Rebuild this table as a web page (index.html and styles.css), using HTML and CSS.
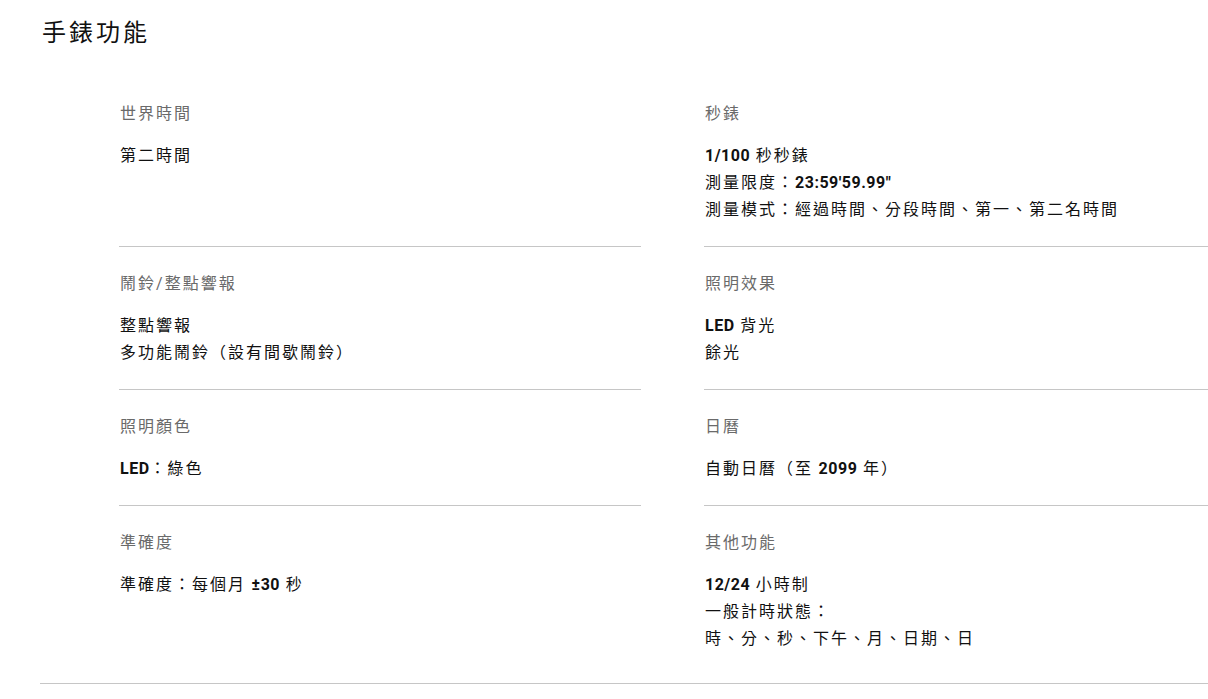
FILE: index.html
```html
<!DOCTYPE html>
<html lang="zh-Hant">
<head>
<meta charset="utf-8">
<title>手錶功能</title>
<link rel="stylesheet" href="styles.css">
</head>
<body>
<section class="features">
  <h2 class="features-title">手錶功能</h2>
  <div class="features-grid">
    <div class="item">
      <div class="label">世界時間</div>
      <div class="value"><p>第二時間</p></div>
    </div>
    <div class="item">
      <div class="label">秒錶</div>
      <div class="value">
        <p><span class="num">1/100</span> 秒秒錶</p>
        <p>測量限度：<span class="num">23:59'59.99"</span></p>
        <p>測量模式：經過時間、分段時間、第一、第二名時間</p>
      </div>
    </div>
    <div class="item">
      <div class="label">鬧鈴<span class="lat">/</span>整點響報</div>
      <div class="value">
        <p>整點響報</p>
        <p>多功能鬧鈴（設有間歇鬧鈴）</p>
      </div>
    </div>
    <div class="item">
      <div class="label">照明效果</div>
      <div class="value">
        <p><span class="num">LED</span> 背光</p>
        <p>餘光</p>
      </div>
    </div>
    <div class="item">
      <div class="label">照明顏色</div>
      <div class="value"><p><span class="num">LED</span>：綠色</p></div>
    </div>
    <div class="item">
      <div class="label">日曆</div>
      <div class="value"><p>自動日曆（至 <span class="num">2099</span> 年）</p></div>
    </div>
    <div class="item last">
      <div class="label">準確度</div>
      <div class="value"><p>準確度：每個月 <span class="num">±30</span> 秒</p></div>
    </div>
    <div class="item last">
      <div class="label">其他功能</div>
      <div class="value">
        <p><span class="num">12/24</span> 小時制</p>
        <p>一般計時狀態：</p>
        <p>時、分、秒、下午、月、日期、日</p>
      </div>
    </div>
  </div>
</section>
</body>
</html>
```

FILE: styles.css
```css
html, body {
  margin: 0;
  padding: 0;
  background: #fff;
  overflow-x: hidden;
}

body {
  font-family: "Noto Sans CJK TC", "Noto Sans CJK SC", sans-serif;
  color: #111;
  width: 1208px;
}

.features {
  margin-left: 40px;
  border-bottom: 1px solid #c6c6c6;
  padding-bottom: 8px;
  width: 1300px;
}

.features-title {
  margin: 15px 0 0 2px;
  font-size: 24px;
  line-height: 32px;
  font-weight: 400;
  letter-spacing: 3px;
  color: #111;
}

.features-grid {
  margin-top: 30px;
  margin-left: 79px;
  display: grid;
  grid-template-columns: 522px 522px;
  column-gap: 63px;
}

.item {
  padding: 23px 0 24px 1px;
  border-bottom: 1px solid #c6c6c6;
}

.item.last {
  border-bottom: none;
}

.label {
  font-size: 16px;
  line-height: 24px;
  height: 24px;
  letter-spacing: 2px;
  color: #6a6a6a;
  margin-bottom: 17px;
}

.value {
  font-size: 16px;
  line-height: 27px;
  letter-spacing: 2px;
  color: #111;
}

.value p {
  margin: 0;
  height: 27px;
}

.num {
  font-family: "Roboto", "Liberation Sans", sans-serif;
  font-weight: 700;
  letter-spacing: 0.5px;
  line-height: 1;
}

.lat {
  font-family: "Roboto", "Liberation Sans", sans-serif;
  line-height: 1;
}
```
